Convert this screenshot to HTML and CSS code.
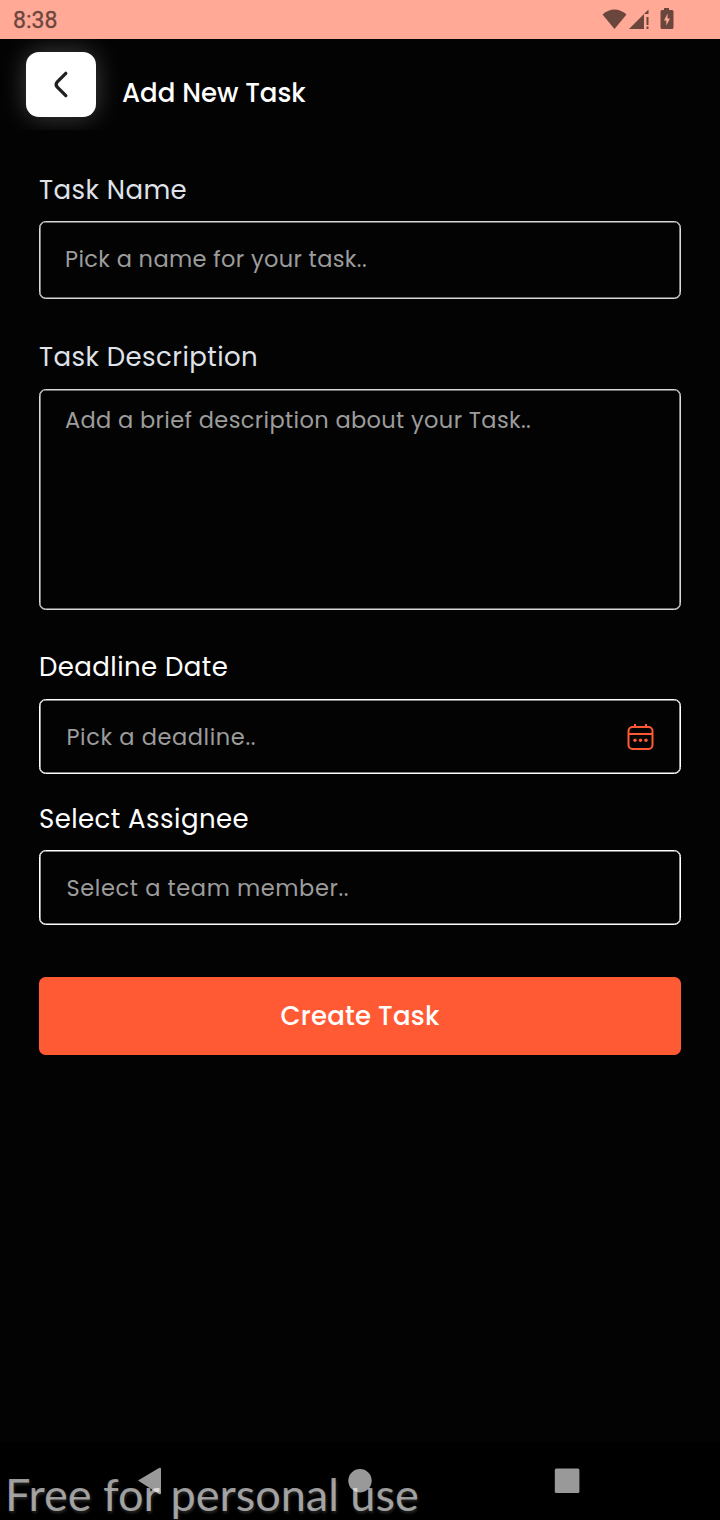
FILE: index.html
```html
<!DOCTYPE html>
<html lang="en">
<head>
<meta charset="utf-8">
<title>Add New Task</title>
<link rel="stylesheet" href="styles.css">
</head>
<body>
<div class="screen">
  <div class="status-bar">
    <span class="clock">8:38</span>
    <svg class="status-icons" width="76" height="24" viewBox="0 0 76 24" fill="#6a463d">
      <path d="M0.500 6.500Q12.500-3.500 24.500 6.500L12.500 21Z"/>
      <path d="M27 21L46.500 1.500V6H42V21ZM44.500 9h2v8h-2zM44.500 18.500h2V21h-2z"/>
      <path fill-rule="evenodd" d="M59 2h3V0h5v2h3q1.500 0 1.500 1.500V19.500q0 1.500-1.500 1.500H60q-1.500 0-1.500-1.500V3.500q0-1.500 1.500-1.500zM65.500 5.500L62 12.500H64.300V17.500L68 10.500H65.500Z"/>
    </svg>
  </div>
  <header class="header">
    <div class="back">
      <svg width="18" height="30" viewBox="0 0 18 30" fill="none" stroke="#202020" stroke-width="3.300" stroke-linecap="round" stroke-linejoin="round"><path d="M13.800 3.300L5.300 11.800Q3 14.500 5.300 17.200L13.800 25.700"/></svg>
    </div>
    <h1 class="title">Add New Task</h1>
  </header>
  <main class="form">
    <div class="field muted name">
      <div class="label">Task Name</div>
      <div class="box box-name">Pick a name for your task..</div>
    </div>
    <div class="field muted">
      <div class="label">Task Description</div>
      <div class="box box-desc">Add a brief description about your Task..</div>
    </div>
    <div class="field deadline">
      <div class="label">Deadline Date</div>
      <div class="box box-select"><span>Pick a deadline..</span>
        <svg width="27" height="28" viewBox="0 0 27 28" fill="none" stroke="#ff5a33" stroke-width="2"><rect x="1.500" y="4" width="24" height="22" rx="4"/><path d="M1.500 11H25.500M8 1v3M19 1v3"/><g fill="#ff5a33" stroke="none"><circle cx="8" cy="17.300" r="1.700"/><circle cx="13.500" cy="17.300" r="1.700"/><circle cx="19" cy="17.300" r="1.700"/></g></svg>
      </div>
    </div>
    <div class="field assignee">
      <div class="label">Select Assignee</div>
      <div class="box box-select"><span>Select a team member..</span></div>
    </div>
    <div class="submit">Create Task</div>
  </main>
  <footer class="nav-bar">
    <svg width="720" height="78" viewBox="0 0 720 78" fill="#999"><path d="M138 38.500L159 26Q161 25 161 27V51Q161 53 159 52Z"/><circle cx="360" cy="38.800" r="11.700"/><rect x="554.800" y="26.500" width="24.600" height="24.600" rx="1.500"/></svg>
    <div class="watermark">Free for personal use</div>
  </footer>
</div>
</body>
</html>
```
FILE: styles.css
```css
* { box-sizing: border-box; }
body { margin: 0; background: #030303; }
.screen {
  width: 720px; height: 1520px; display: flex; flex-direction: column;
  background: #030303; color: #fff; overflow: hidden; white-space: nowrap;
  font-family: Poppins, Inter, "Open Sans", sans-serif;
}
.status-bar {
  height: 39px; flex: none; display: flex; align-items: center; justify-content: space-between;
  padding: 0 42px 0 13px; background: #ffa996; color: #6a463d;
}
.clock { font: 400 23px/39px Roboto, sans-serif; padding-top: 2px; -webkit-text-stroke: .3px #6a463d; }
.status-icons { display: block; }
.header { height: 91px; flex: none; display: flex; padding: 13px 26px; gap: 26px; overflow: hidden; }
.back {
  width: 70px; height: 65px; flex: none; display: flex; align-items: center; justify-content: center;
  border-radius: 13px; background: #fff; box-shadow: 0 0 26px rgba(255, 255, 255, .25);
}
.title { margin: 0; padding-top: 21px; font-size: 26px; line-height: 40px; font-weight: 500; }
.form { flex: 1; display: flex; flex-direction: column; padding: 40px 39px 0; }
.field { margin-bottom: 37px; color: #fff; }
.muted { color: #dfe2e8; }
.name { margin-bottom: 38px; }
.deadline { margin-bottom: 25px; }
.assignee { margin-bottom: 52px; }
.label { height: 39px; margin-bottom: 13px; font-size: 26px; line-height: 41px; letter-spacing: .43px; }
.name .label, .assignee .label { margin-bottom: 12px; }
.box {
  display: flex; align-items: center; justify-content: space-between;
  border: 1px solid #fff; box-shadow: inset 0 0 0 .6px #fff;
  border-radius: 6.5px; color: #9c9c9c; font-size: 22.5px; line-height: 34px; letter-spacing: .59px;
}
.muted .box { border-color: #d8d8d8; box-shadow: inset 0 0 0 .6px #d8d8d8; letter-spacing: .37px; }
.box-name { height: 78px; padding: 0 25px 2px; }
.box-desc { height: 221px; align-items: flex-start; padding: 13px 25px 0; }
.box-select { height: 75px; padding: 1px 26px 0 26.5px; }
.submit {
  height: 78px; display: flex; align-items: center; justify-content: center;
  border-radius: 6.5px; background: #ff5a33; font-size: 26px; font-weight: 500; letter-spacing: .2px;
}
.nav-bar { position: relative; height: 78px; flex: none; background: #000; }
.nav-bar svg { display: block; }
.watermark {
  position: absolute; left: 5px; top: 26px; font: 45px/52px Lato, sans-serif;
  color: rgba(255, 255, 255, .6); text-shadow: 1px 2px 3px rgba(255, 255, 255, .16);
}
```
